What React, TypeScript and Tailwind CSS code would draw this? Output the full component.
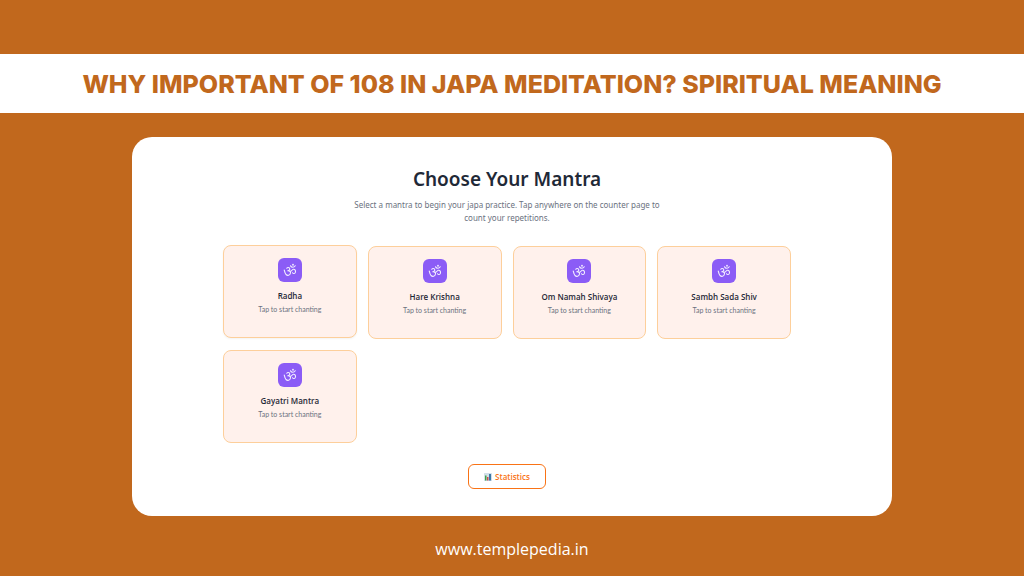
interface Mantra {
  name: string;
  active?: boolean;
}

const mantras: Mantra[] = [
  { name: 'Radha', active: true },
  { name: 'Hare Krishna' },
  { name: 'Om Namah Shivaya' },
  { name: 'Sambh Sada Shiv' },
  { name: 'Gayatri Mantra' },
];

function OmIcon() {
  return (
    <svg
      viewBox="0 0 28 28"
      className="h-3.5 w-3.5"
      fill="none"
      stroke="currentColor"
      strokeWidth="2.2"
      strokeLinecap="round"
      strokeLinejoin="round"
      aria-hidden="true"
    >
      <path d="M7.5 10.5C9 8.5 13 8.5 13.5 11.5C13.8 14 12 15.5 9.5 15.5C13 15 15.5 17 15 20C14 25 9 26 6 23C4 20.5 3.2 17 2.5 14" />
      <path d="M14.5 16.5C17.5 17 18 13 20.5 12.5C23.5 12 25.5 14.5 25 18C24.5 21.5 20.5 22 19 19.5" />
      <path d="M15 5.5C16.5 9.5 22 9.5 24.5 5.5" />
      <circle cx="20" cy="3.5" r="1.8" fill="currentColor" stroke="none" />
    </svg>
  );
}

function ChartIcon() {
  return (
    <svg viewBox="0 0 16 16" className="h-2 w-2" aria-hidden="true">
      <rect width="16" height="16" rx="1" fill="#d3dfe8" />
      <rect x="2" y="5" width="3" height="10" fill="#43a047" />
      <rect x="6" y="8" width="3" height="7" fill="#c94f4f" />
      <rect x="10" y="2" width="4" height="13" fill="#3b78a8" />
    </svg>
  );
}

function MantraCard({ name, active }: Mantra) {
  return (
    <button
      type="button"
      className={`flex h-[93px] flex-col items-center rounded-lg border border-[#fdcf9b] bg-[#fff1ec] pt-3 ${
        active ? '-translate-y-px shadow-xs' : ''
      }`}
    >
      <span className="flex h-6 w-6 items-center justify-center rounded-md bg-[#8b5cf6] text-[#f3eeff]">
        <OmIcon />
      </span>
      <span className="mt-2 font-['Open_Sans',sans-serif] text-[8px] leading-3 font-semibold text-[#1f2937]">
        {name}
      </span>
      <span className="mt-px font-['Lato',sans-serif] text-[7px] leading-3 text-[#6b7280]">
        Tap to start chanting
      </span>
    </button>
  );
}

export default function App() {
  return (
    <div className="flex min-h-screen flex-col bg-[#c1681d] font-['Noto_Sans',sans-serif]">
      <header className="mt-[54px] bg-white pt-[13px] pb-[11px] text-center">
        <h1 className="font-['Inter',sans-serif] text-[25px] leading-[35px] font-extrabold whitespace-nowrap text-[#c1681d]">
          WHY IMPORTANT OF 108 IN JAPA MEDITATION? SPIRITUAL MEANING
        </h1>
      </header>

      <main className="mx-[132px] mt-6 flex flex-col rounded-[20px] bg-white pt-7 pr-[101px] pb-[27px] pl-[91px]">
        <h2 className="text-center text-[19px] leading-7 font-semibold text-[#1f2937]">
          Choose Your Mantra
        </h2>
        <p className="mx-auto mt-[5px] w-80 text-center text-[8px] leading-[13px] text-[#6b7280]">
          Select a mantra to begin your japa practice. Tap anywhere on the counter page to count your
          repetitions.
        </p>

        <div className="mt-[22px] grid grid-cols-4 gap-[11px]">
          {mantras.map((mantra) => (
            <MantraCard key={mantra.name} {...mantra} />
          ))}
        </div>

        <button
          type="button"
          className="mx-auto mt-[21px] flex h-[25px] w-[78px] items-center justify-center gap-[3px] rounded-md border border-[#f97316] font-['Open_Sans',sans-serif] text-[8px] font-semibold text-[#f97316]"
        >
          <ChartIcon />
          Statistics
        </button>
      </main>

      <footer className="mt-[21px] text-center">
        <a href="#" className="font-['Open_Sans',sans-serif] text-[16px] leading-6 text-white">
          www.templepedia.in
        </a>
      </footer>
    </div>
  );
}
